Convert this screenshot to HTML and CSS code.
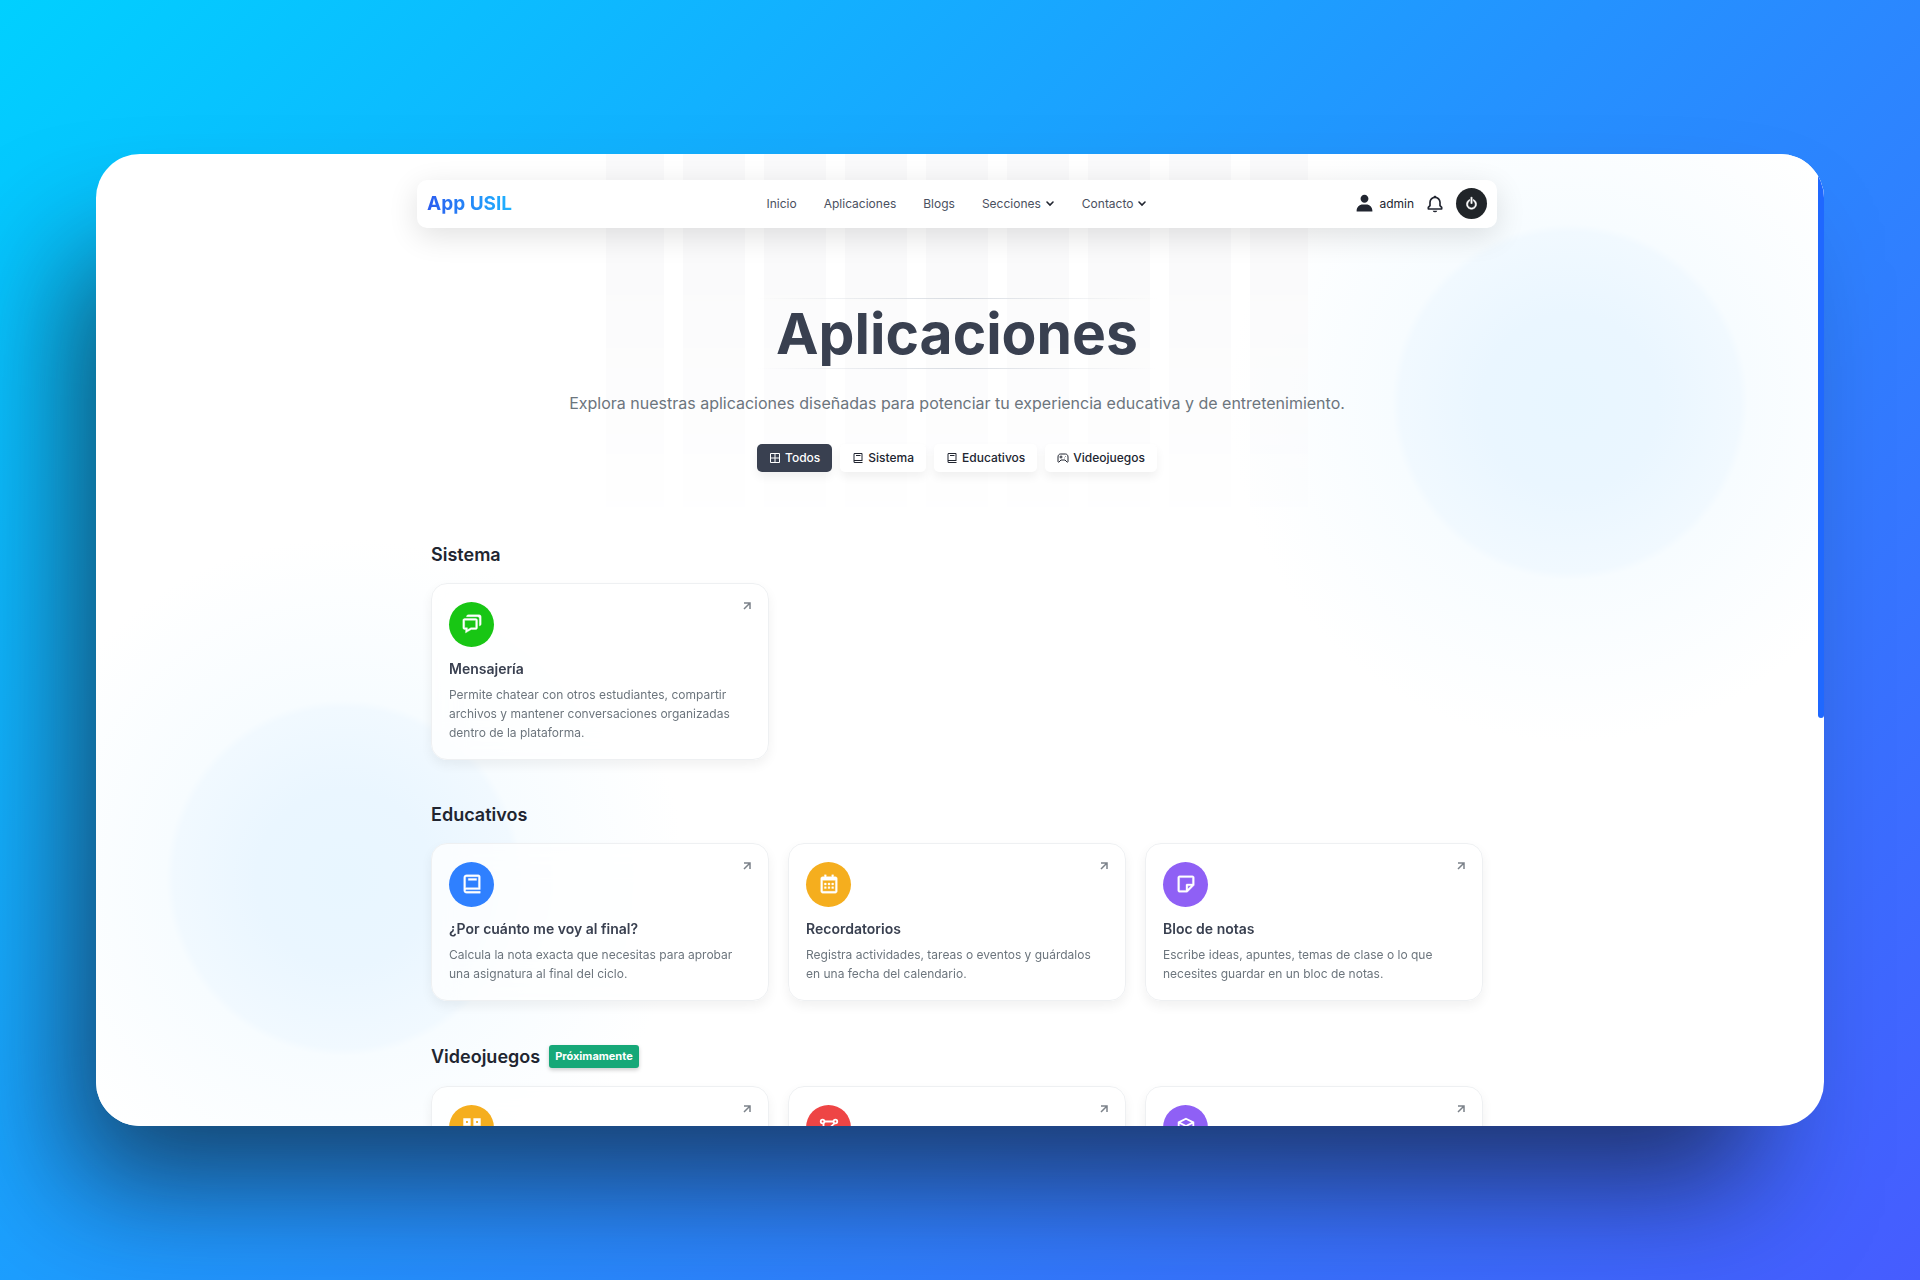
FILE: index.html
```html
<!DOCTYPE html>
<html lang="es">
<head>
<meta charset="utf-8">
<meta name="viewport" content="width=device-width, initial-scale=1">
<title>App USIL</title>
<link rel="stylesheet" href="styles.css">
</head>
<body>
<svg class="sprite" aria-hidden="true">
  <symbol id="book" viewBox="0 0 24 24"><path d="M6 22h15v-2H6.012C5.55 19.988 5 19.805 5 19s.55-.988 1.012-1H21V4c0-1.103-.897-2-2-2H6c-1.206 0-3 .799-3 3v14c0 2.201 1.794 3 3 3zM5 8V5c0-.805.55-.988 1-1h13v12H5V8z"/><path d="M8 6h9v2H8z"/></symbol>
  <symbol id="note" viewBox="0 0 24 24"><path d="M19 3H5c-1.103 0-2 .897-2 2v14c0 1.103.897 2 2 2h8a.996.996 0 0 0 .707-.293l7-7a.997.997 0 0 0 .196-.293c.014-.03.022-.061.033-.093a.991.991 0 0 0 .051-.259c.002-.021.013-.041.013-.062V5c0-1.103-.897-2-2-2zM5 5h14v7h-6a1 1 0 0 0-1 1v6H5V5zm9 12.586V14h3.586L14 17.586z"/></symbol>
  <symbol id="chat" viewBox="0 0 24 24"><path d="M5 18v3.766l1.515-.909L11.277 18H16c1.103 0 2-.897 2-2V8c0-1.103-.897-2-2-2H4c-1.103 0-2 .897-2 2v8c0 1.103.897 2 2 2h1zM4 8h12v8h-5.277L7 18.234V16H4V8z"/><path d="M20 2H8c-1.103 0-2 .897-2 2h12c1.103 0 2 .897 2 2v8c1.103 0 2-.897 2-2V4c0-1.103-.897-2-2-2z"/></symbol>
  <symbol id="calendar" viewBox="0 0 24 24"><path d="M7 11h2v2H7zm0 4h2v2H7zm4-4h2v2h-2zm0 4h2v2h-2zm4-4h2v2h-2zm0 4h2v2h-2z"/><path d="M5 22h14c1.103 0 2-.897 2-2V6c0-1.103-.897-2-2-2h-2V2h-2v2H9V2H7v2H5c-1.103 0-2 .897-2 2v14c0 1.103.897 2 2 2zM19 8l.001 12H5V8h14z"/></symbol>
  <symbol id="bell" viewBox="0 0 24 24"><path d="M19 13.586V10c0-3.217-2.185-5.927-5.145-6.742C13.562 2.52 12.846 2 12 2s-1.562.52-1.855 1.258C7.185 4.074 5 6.783 5 10v3.586l-1.707 1.707A.996.996 0 0 0 3 16v2a1 1 0 0 0 1 1h16a1 1 0 0 0 1-1v-2a.996.996 0 0 0-.293-.707L19 13.586zM19 17H5v-.586l1.707-1.707A.996.996 0 0 0 7 14v-4c0-2.757 2.243-5 5-5s5 2.243 5 5v4c0 .266.105.52.293.707L19 16.414V17zm-7 5a2.98 2.98 0 0 0 2.818-2H9.182A2.98 2.98 0 0 0 12 22z"/></symbol>
  <symbol id="user" viewBox="0 0 24 24"><path d="M7.5 6.5C7.5 8.981 9.519 11 12 11s4.5-2.019 4.5-4.5S14.481 2 12 2 7.5 4.019 7.5 6.5zM20 21h1v-1c0-3.859-3.141-7-7-7h-4c-3.86 0-7 3.141-7 7v1h17z"/></symbol>
  <symbol id="power" viewBox="0 0 24 24"><path d="M12 21c4.411 0 8-3.589 8-8 0-3.35-2.072-6.221-5-7.411v2.223A6 6 0 0 1 18 13c0 3.309-2.691 6-6 6s-6-2.691-6-6a5.999 5.999 0 0 1 3-5.188V5.589C6.072 6.779 4 9.65 4 13c0 4.411 3.589 8 8 8z"/><path d="M11 2h2v10h-2z"/></symbol>
  <symbol id="down" viewBox="0 0 10 10"><path d="M2 3l3 3 3-3" fill="none" stroke="currentColor" stroke-width="1.600" stroke-linecap="round"/></symbol>
  <symbol id="out" viewBox="0 0 8 8"><path d="M1 1h6v6M7 1L1 7" fill="none" stroke="currentColor" stroke-width="1.500"/></symbol>
  <symbol id="grid" viewBox="0 0 24 24"><path d="M3 3h18v18H3zM12 3v18M3 12h18" fill="none" stroke="currentColor" stroke-width="2"/></symbol>
  <symbol id="game" viewBox="0 0 24 24"><path d="M7 4h10c2.500 0 5 2 5 6v9c0 1-1 2-2 1l-4-4H8l-4 4c-1 1-2 0-2-1v-9c0-4 2.500-6 5-6zM8 7v6M5 10h6M15 12h1M17 9h1" fill="none" stroke="currentColor" stroke-width="2"/></symbol>
  <symbol id="blocks" viewBox="0 0 24 24"><path d="M4 4h5v5H4zM15 4h5v5h-5zM4 15h5v5H4zM15 15h5v5h-5z" fill="none" stroke="currentColor" stroke-width="3"/></symbol>
  <symbol id="nodes" viewBox="0 0 24 24"><path d="M7 6h10M6 8v8M18 8l-10 9" fill="none" stroke="currentColor" stroke-width="2"/><g fill="none" stroke="currentColor" stroke-width="2"><circle cx="5" cy="6" r="2"/><circle cx="19" cy="6" r="2"/><circle cx="6" cy="18" r="2"/></g></symbol>
  <symbol id="cube" viewBox="0 0 24 24"><path d="M12 3l8 4v10l-8 4-8-4V7zM4 7l8 4 8-4M12 11v10" fill="none" stroke="currentColor" stroke-width="2"/></symbol>
</svg>

<main class="window">
  <div class="glow glow-right"></div>
  <div class="glow glow-left"></div>
  <div class="stripes"></div>

  <div class="page">
    <header class="navbar">
      <a class="logo" href="#">App USIL</a>
      <nav class="menu">
        <a href="#">Inicio</a>
        <a href="#">Aplicaciones</a>
        <a href="#">Blogs</a>
        <a href="#">Secciones <svg><use href="#down"/></svg></a>
        <a href="#">Contacto <svg><use href="#down"/></svg></a>
      </nav>
      <div class="account">
        <a class="user" href="#"><svg><use href="#user"/></svg>admin</a>
        <button class="bell" type="button" aria-label="Notificaciones"><svg><use href="#bell"/></svg></button>
        <button class="power" type="button" aria-label="Salir"><svg><use href="#power"/></svg></button>
      </div>
    </header>

    <section class="hero">
      <h1>Aplicaciones</h1>
      <p>Explora nuestras aplicaciones diseñadas para potenciar tu experiencia educativa y de entretenimiento.</p>
      <div class="filters">
        <button class="filter active" type="button"><svg><use href="#grid"/></svg>Todos</button>
        <button class="filter" type="button"><svg><use href="#book"/></svg>Sistema</button>
        <button class="filter" type="button"><svg><use href="#book"/></svg>Educativos</button>
        <button class="filter" type="button"><svg><use href="#game"/></svg>Videojuegos</button>
      </div>
    </section>

    <section class="group">
      <h2>Sistema</h2>
      <div class="cards">
        <a class="card" href="#">
          <span class="card-top"><span class="badge green"><svg><use href="#chat"/></svg></span><svg class="out"><use href="#out"/></svg></span>
          <h3>Mensajería</h3>
          <p>Permite chatear con otros estudiantes, compartir archivos y mantener conversaciones organizadas dentro de la plataforma.</p>
        </a>
      </div>
    </section>

    <section class="group">
      <h2>Educativos</h2>
      <div class="cards">
        <a class="card" href="#">
          <span class="card-top"><span class="badge blue"><svg><use href="#book"/></svg></span><svg class="out"><use href="#out"/></svg></span>
          <h3>¿Por cuánto me voy al final?</h3>
          <p>Calcula la nota exacta que necesitas para aprobar una asignatura al final del ciclo.</p>
        </a>
        <a class="card" href="#">
          <span class="card-top"><span class="badge amber"><svg><use href="#calendar"/></svg></span><svg class="out"><use href="#out"/></svg></span>
          <h3>Recordatorios</h3>
          <p>Registra actividades, tareas o eventos y guárdalos en una fecha del calendario.</p>
        </a>
        <a class="card" href="#">
          <span class="card-top"><span class="badge violet"><svg><use href="#note"/></svg></span><svg class="out"><use href="#out"/></svg></span>
          <h3>Bloc de notas</h3>
          <p>Escribe ideas, apuntes, temas de clase o lo que necesites guardar en un bloc de notas.</p>
        </a>
      </div>
    </section>

    <section class="group">
      <h2>Videojuegos <span class="soon">Próximamente</span></h2>
      <div class="cards">
        <a class="card" href="#"><span class="card-top"><span class="badge amber"><svg><use href="#blocks"/></svg></span><svg class="out"><use href="#out"/></svg></span></a>
        <a class="card" href="#"><span class="card-top"><span class="badge red"><svg><use href="#nodes"/></svg></span><svg class="out"><use href="#out"/></svg></span></a>
        <a class="card" href="#"><span class="card-top"><span class="badge violet"><svg><use href="#cube"/></svg></span><svg class="out"><use href="#out"/></svg></span></a>
      </div>
    </section>
  </div>
  <div class="scroll-thumb"></div>
</main>
</body>
</html>
```
FILE: styles.css
```css
* { box-sizing: border-box; margin: 0; }

body {
  min-height: 100vh;
  display: flex;
  align-items: center;
  justify-content: center;
  font-family: Inter, "Liberation Sans", sans-serif;
  color: #212530;
  background: linear-gradient(135deg, #00d0ff 0%, #2492ff 50%, #465cff 100%);
  overflow: hidden;
}

a { color: inherit; text-decoration: none; }
button { font: inherit; color: inherit; border: 0; cursor: pointer; }
svg { display: block; flex: none; fill: currentColor; }
.sprite { position: absolute; width: 0; height: 0; }

.window {
  position: relative;
  width: 90%;
  height: 76vh;
  border-radius: 44px;
  background: #fff;
  overflow: hidden;
  box-shadow: -46px 80px 120px -25px rgba(16, 20, 30, .66);
}

/* background decoration */
.glow {
  position: absolute;
  width: 720px;
  height: 720px;
  border-radius: 50%;
  background: radial-gradient(circle, #e8f6ff 0, #eaf6ff 88px, #f1f9ff 170px, #f7fcff 178px, #fff 340px);
}
.glow-right { top: -112px; right: -106px; }
.glow-left { left: -112px; bottom: -112px; }
.stripes {
  position: absolute;
  top: 0;
  left: 510px;
  width: 702px;
  height: 380px;
  background: repeating-linear-gradient(90deg, #fafafb 0 58px, transparent 58px 77px, #fafafb 77px 81px);
  -webkit-mask: linear-gradient(#000 30%, transparent);
  mask: linear-gradient(#000 30%, transparent);
}
.scroll-thumb {
  position: absolute;
  top: 0;
  right: 0;
  width: 6px;
  height: 58%;
  border-radius: 3px;
  background: #1f68ff;
}

.page {
  position: relative;
  max-width: 1086px;
  margin: 0 auto;
  padding: 26px 6px 0 0;
}

.navbar {
  display: grid;
  grid-template-columns: 1fr auto 1fr;
  align-items: center;
  height: 48px;
  padding: 0 10px;
  border-radius: 10px;
  background: #fff;
  box-shadow: 0 8px 30px rgba(0, 0, 0, .12);
}
.logo {
  justify-self: start;
  font-size: 19px;
  font-weight: 700;
  background: linear-gradient(90deg, #2b5cf0, #1eb4ff);
  -webkit-background-clip: text;
  background-clip: text;
  color: transparent;
}
.menu { display: flex; gap: 27px; font-size: 12px; color: #4a5060; }
.menu a { display: flex; align-items: center; gap: 4px; }
.menu svg { width: 10px; height: 10px; color: #212530; }
.account { justify-self: end; display: flex; align-items: center; gap: 11px; font-size: 12px; }
.user { display: flex; align-items: center; gap: 4px; }
.user svg { width: 21px; height: 21px; }
.bell { padding: 0; background: none; }
.bell svg { width: 20px; height: 20px; }
.power {
  display: grid;
  place-items: center;
  width: 31px;
  height: 31px;
  padding: 0;
  border-radius: 50%;
  color: #fff;
  background: #212529;
}
.power svg { width: 15px; height: 15px; }
.power svg { stroke: currentColor; stroke-width: 1px; }

.hero { display: flex; flex-direction: column; align-items: center; padding-top: 70px; text-align: center; }
.hero h1 {
  width: 400px;
  line-height: 71px;
  font-size: 57px;
  font-weight: 700;
  color: #394050;
  background:
    linear-gradient(90deg, transparent, #d8dce2, transparent) top / 100% 1px no-repeat,
    linear-gradient(90deg, transparent, #d8dce2, transparent) bottom / 100% 1px no-repeat;
}
.hero p { margin-top: 22px; font-size: 16px; line-height: 24px; color: #6c757d; }
.filters { display: flex; gap: 8px; margin-top: 29px; }
.filter {
  display: flex;
  align-items: center;
  gap: 4px;
  height: 28px;
  padding: 0 12px;
  border-radius: 5px;
  font-size: 12px;
  font-weight: 500;
  background: #fff;
  box-shadow: 0 5px 10px rgba(0, 0, 0, .06);
}
.filter svg { width: 12px; height: 12px; }
.filter.active { color: #fff; background: #394050; }

.group { padding: 41px 14px 0; }
.hero + .group { padding-top: 69px; }
.group h2 {
  display: flex;
  align-items: center;
  gap: 9px;
  margin-bottom: 15px;
  font-size: 18px;
  line-height: 27px;
  font-weight: 600;
}
.soon {
  margin: 3px 0;
  padding: 0 6px;
  border-radius: 3px;
  font-size: 11px;
  line-height: 23px;
  font-weight: 700;
  color: #fff;
  background: #16a878;
  box-shadow: 0 2px 4px rgba(0, 0, 0, .2);
}
.cards { display: grid; grid-template-columns: repeat(3, 1fr); gap: 19px; }
.card {
  padding: 18px 17px 17px;
  border: 1px solid #eef0f2;
  border-radius: 16px;
  background: rgba(255, 255, 255, .75);
  backdrop-filter: blur(16px);
  box-shadow: 0 5px 12px rgba(0, 0, 0, .06);
}
.card-top { display: flex; justify-content: space-between; }
.badge { display: grid; place-items: center; width: 45px; height: 45px; border-radius: 50%; color: #fff; }
.badge svg { width: 22px; height: 22px; stroke: currentColor; stroke-width: .4px; }
.green { background: #18c614; }
.blue { background: #2f80ff; }
.amber { background: #f5ae1e; }
.violet { background: #8f60f5; }
.red { background: #ee4545; }
.out { width: 8px; height: 8px; color: #7c828a; }
.card h3 { margin-top: 11px; font-size: 14px; line-height: 21px; font-weight: 600; color: #394050; }
.card p { margin-top: 6px; font-size: 12px; line-height: 19px; color: #6c757d; }
```
